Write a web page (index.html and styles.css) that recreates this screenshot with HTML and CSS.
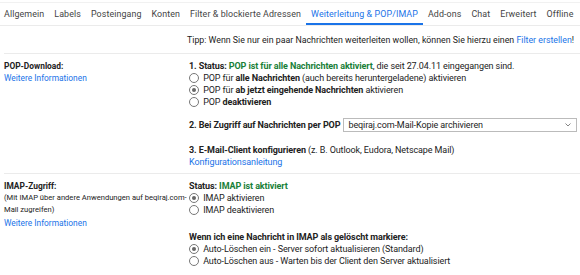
FILE: index.html
```html
<!DOCTYPE html>
<html lang="de">
  <head>
    <meta charset="UTF-8" />
    <title>Einstellungen</title>
    <link rel="stylesheet" href="styles.css">
  </head>
  <body>
    <nav class="tabs">
      <a>Allgemein</a>
      <a>Labels</a>
      <a>Posteingang</a>
      <a>Konten</a>
      <a>Filter &amp; blockierte Adressen</a>
      <a class="active">Weiterleitung &amp; POP/IMAP</a>
      <a>Add-ons</a>
      <a>Chat</a>
      <a>Erweitert</a>
      <a>Offline</a>
    </nav>

    <div class="section tip-row">
      <div></div>
      <div class="tip">Tipp: Wenn Sie nur ein paar Nachrichten weiterleiten wollen, können Sie hierzu einen <a class="link">Filter erstellen</a>!</div>
    </div>

    <div class="section">
      <div class="label">
        <b>POP-Download:</b>
        <a class="link">Weitere Informationen</a>
      </div>
      <div class="options">
        <p><b>1. Status: <span class="ok">POP ist für alle Nachrichten aktiviert</span></b>, die seit 27.04.11 eingegangen sind.</p>
        <label class="opt"><span class="radio"></span> POP für <b>alle Nachrichten</b> (auch bereits heruntergeladene) aktivieren</label>
        <label class="opt"><span class="radio on"></span> POP für <b>ab jetzt eingehende Nachrichten</b> aktivieren</label>
        <label class="opt"><span class="radio"></span> POP <b>deaktivieren</b></label>

        <div class="select-row">
          <b>2. Bei Zugriff auf Nachrichten per POP</b>
          <div class="select">
            <span>beqiraj.com-Mail-Kopie archivieren</span>
            <svg width="8" height="6" viewBox="0 0 8 6"><path d="M1.5 1.5 L4 4 L6.5 1.5" fill="none" stroke="#777" stroke-width="0.9"/></svg>
          </div>
        </div>

        <p class="gap"><b>3. E-Mail-Client konfigurieren</b> (z. B. Outlook, Eudora, Netscape Mail)</p>
        <a class="link">Konfigurationsanleitung</a>
      </div>
    </div>

    <div class="section last">
      <div class="label">
        <b>IMAP-Zugriff:</b>
        <span class="small">(Mit IMAP über andere Anwendungen auf beqiraj.com-Mail zugreifen)</span>
        <a class="link">Weitere Informationen</a>
      </div>
      <div class="options">
        <p><b>Status: <span class="ok">IMAP ist aktiviert</span></b></p>
        <label class="opt"><span class="radio on"></span> IMAP aktivieren</label>
        <label class="opt"><span class="radio"></span> IMAP deaktivieren</label>

        <p class="gap2"><b>Wenn ich eine Nachricht in IMAP als gelöscht markiere:</b></p>
        <label class="opt"><span class="radio on"></span> Auto-Löschen ein - Server sofort aktualisieren (Standard)</label>
        <label class="opt"><span class="radio"></span> Auto-Löschen aus - Warten bis der Client den Server aktualisiert</label>
      </div>
    </div>
  </body>
</html>
```

FILE: styles.css
```css
body {
  margin: 0;
  background: #fff;
  font-family: Roboto, "Liberation Sans", sans-serif;
  font-size: 9px;
  line-height: 12px;
  letter-spacing: -0.1px;
  color: #222;
}

p {
  margin: 0;
}

b {
  font-weight: 700;
}

.tabs {
  display: flex;
  gap: 10px;
  margin-top: 2px;
  padding: 0 4px;
  border-top: 1px solid #f1f1f1;
  border-bottom: 1px solid #ebebeb;
  height: 22px;
  font-size: 8.9px;
  letter-spacing: 0.1px;
  white-space: nowrap;
  color: #444;
}

.tabs a {
  display: flex;
  align-items: center;
  padding-top: 1px;
  border-bottom: 2px solid transparent;
}

.tabs a.active {
  color: #1a73e8;
  border-bottom-color: #1a73e8;
  padding: 1px 5px 0;
  margin: 0 -5px;
}

.link {
  color: #1a73e8;
}

.ok {
  color: #188038;
}

.section {
  display: grid;
  grid-template-columns: 185px 1fr;
  margin-left: 4px;
  padding: 6px 0 5px;
  border-bottom: 1px solid #ebebeb;
}

.section.last {
  border-bottom: none;
}

.tip-row {
  padding: 8px 0 7px;
}

.tip {
  white-space: nowrap;
  font-size: 8.8px;
  letter-spacing: 0;
  margin-left: -2px;
}

.label {
  display: flex;
  flex-direction: column;
  font-size: 8.4px;
  letter-spacing: 0;
}

.label .small {
  font-size: 7.6px;
  line-height: 12px;
  margin: 0 0 1px;
}

.options {
  display: flex;
  flex-direction: column;
  align-items: flex-start;
  white-space: nowrap;
}

.opt {
  display: block;
  height: 12px;
}

.radio {
  display: inline-block;
  position: relative;
  box-sizing: border-box;
  width: 10px;
  height: 10px;
  border: 1px solid #777;
  border-radius: 50%;
  margin-right: 2px;
  vertical-align: top;
  margin-top: 1px;
}

.radio.on::after {
  content: "";
  position: absolute;
  left: 2px;
  top: 2px;
  width: 4px;
  height: 4px;
  border-radius: 50%;
  background: #666;
}

.select-row {
  display: flex;
  align-items: center;
  gap: 3px;
  margin-top: 10px;
  width: 100%;
}

.select {
  flex: 1;
  display: flex;
  justify-content: space-between;
  align-items: center;
  height: 12px;
  padding: 0 4px;
  margin-right: 3px;
  border: 1px solid #bbb;
}

.gap {
  margin-top: 12px;
}

.gap2 {
  margin-top: 15px;
}
```
